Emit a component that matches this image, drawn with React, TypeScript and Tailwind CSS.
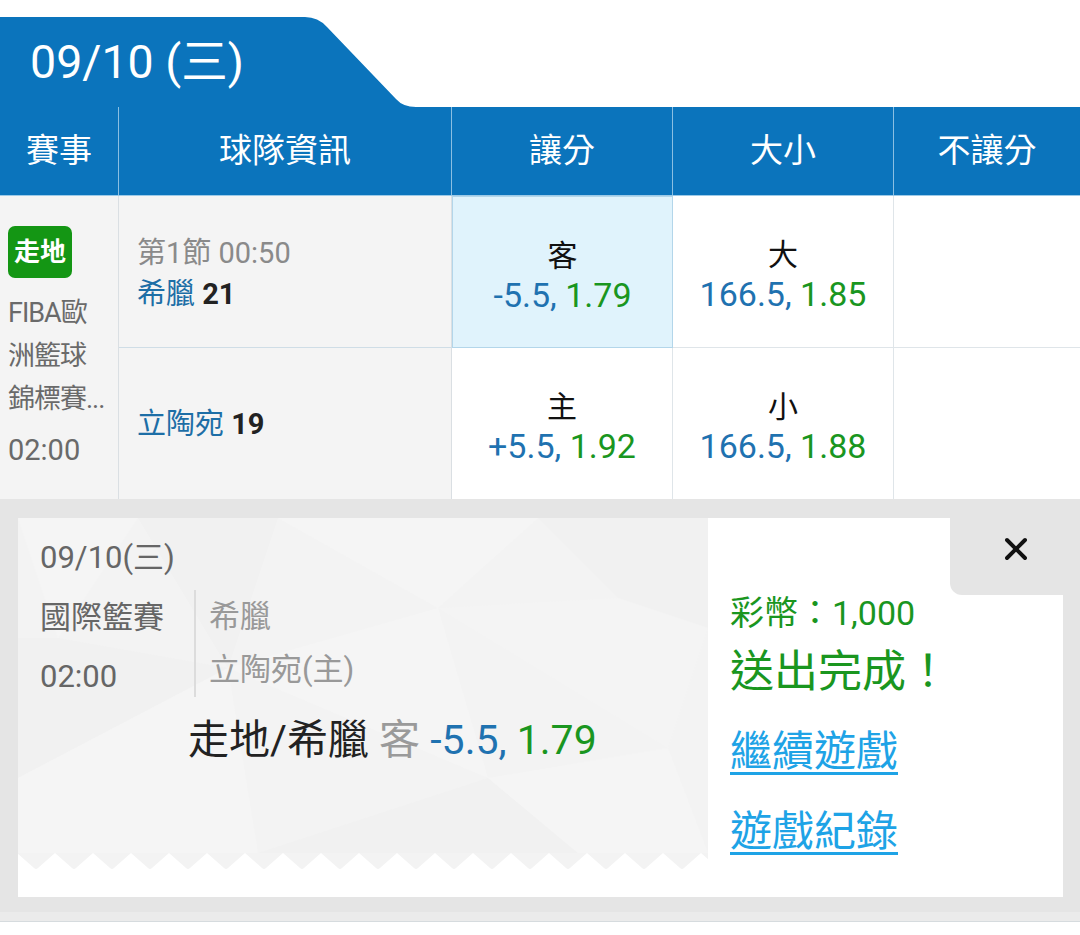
import React from "react";
import { X } from "lucide-react";

const F = "font-[Roboto,'Noto_Sans_CJK_TC',sans-serif]";

function Odds({ label, a, b }: { label: string; a: string; b: string }) {
  return (
    <div className="flex flex-col items-center justify-center h-full pt-[7px]">
      <div className="text-[30px] leading-[38px] text-[#111]">{label}</div>
      <div className="text-[34px] leading-[40px]">
        <span className="text-[#1f72b0]">{a}, </span>
        <span className="text-[#1a961f]">{b}</span>
      </div>
    </div>
  );
}

function Zigzag() {
  return (
    <svg width="100%" height="17" className="block">
      <defs>
        <pattern id="zz" x="-1" y="0" width="38" height="17" patternUnits="userSpaceOnUse">
          <path d="M0 0 H38 L21 15 Q19 17 17 15 Z" fill="#f3f3f3" />
        </pattern>
      </defs>
      <rect width="100%" height="17" fill="#ffffff" />
      <rect width="100%" height="17" fill="url(#zz)" />
    </svg>
  );
}

function LowPoly() {
  return (
    <svg className="absolute inset-0 w-full h-full" viewBox="0 0 690 335" preserveAspectRatio="none">
      <polygon points="0,0 120,0 40,120" fill="#f5f5f5" />
      <polygon points="120,0 260,0 210,150" fill="#f1f1f1" />
      <polygon points="260,0 520,0 420,90" fill="#f5f5f5" />
      <polygon points="520,0 690,0 690,110 600,80" fill="#f1f1f1" />
      <polygon points="0,120 40,120 210,150 0,260" fill="#f1f1f1" />
      <polygon points="210,150 420,90 470,260" fill="#f5f5f5" />
      <polygon points="420,90 600,80 690,110 650,230" fill="#f4f4f4" />
      <polygon points="0,260 210,150 240,335 0,335" fill="#f5f5f5" />
      <polygon points="240,335 470,260 560,335" fill="#f1f1f1" />
      <polygon points="470,260 650,230 690,335 560,335" fill="#f5f5f5" />
    </svg>
  );
}

export default function App() {
  return (
    <div className={`${F} w-[1080px] h-[935px] bg-white overflow-hidden flex flex-col`}>
      <div className="h-[17px]" />
      {/* date tab */}
      <div className="w-[416px] h-[90px] bg-[#0b74bc] flex items-center pl-[30px] [clip-path:path('M0,0H305Q318,0,327,10L396,82Q403,90,416,90H0Z')]">
        <span className="text-white text-[46.5px] leading-none">09/10 (三)</span>
      </div>
      {/* header */}
      <div className="grid grid-cols-[119px_333px_221px_221px_186px] h-[89px] bg-[#0b74bc] border-b border-[#9ccae8] text-white text-[33px]">
        <div className="flex items-center justify-center border-r border-[#8bbfe2]">賽事</div>
        <div className="flex items-center justify-center border-r border-[#8bbfe2]">球隊資訊</div>
        <div className="flex items-center justify-center border-r border-[#8bbfe2]">讓分</div>
        <div className="flex items-center justify-center border-r border-[#8bbfe2]">大小</div>
        <div className="flex items-center justify-center">不讓分</div>
      </div>
      {/* body */}
      <div className="grid grid-cols-[119px_333px_221px_221px_186px] grid-rows-[152px_151px]">
        <div className="row-span-2 bg-[#f4f4f4] border-r border-[#dadfe3] pl-[8px] pt-[30px] text-[#6a6a6a]">
          <div className="inline-flex items-center justify-center w-[64px] h-[52px] rounded-[7px] bg-[#149614] text-white font-bold text-[26px]">
            走地
          </div>
          <div className="mt-[14px] text-[27px] leading-[43px] tracking-[-1px]">
            <div>FIBA歐</div>
            <div>洲籃球</div>
            <div>錦標賽...</div>
          </div>
          <div className="mt-[9px] text-[29px] leading-[40px]">02:00</div>
        </div>
        <div className="bg-[#f4f4f4] border-r border-b border-r-[#dadfe3] border-b-[#cfdde6] pl-[18px] flex flex-col justify-center pt-[4px]">
          <div className="text-[29px] leading-[41px] text-[#8a8a8a]">第1節 00:50</div>
          <div className="text-[29px] leading-[41px]">
            <span className="text-[#1d6ea6]">希臘</span>{" "}
            <span className="font-bold text-[#222]">21</span>
          </div>
        </div>
        <div className="bg-[#e0f3fc] border border-[#b3d6ea]">
          <Odds label="客" a="-5.5" b="1.79" />
        </div>
        <div className="bg-white border-r border-b border-[#dfe5e9]">
          <Odds label="大" a="166.5" b="1.85" />
        </div>
        <div className="bg-white border-b border-[#dfe5e9]" />
        <div className="bg-[#f4f4f4] border-r border-[#dadfe3] pl-[18px] flex items-center pt-[2px]">
          <div className="text-[29px] leading-[41px]">
            <span className="text-[#1d6ea6]">立陶宛</span>{" "}
            <span className="font-bold text-[#222]">19</span>
          </div>
        </div>
        <div className="bg-white border-r border-[#dfe5e9]">
          <Odds label="主" a="+5.5" b="1.92" />
        </div>
        <div className="bg-white border-r border-[#dfe5e9]">
          <Odds label="小" a="166.5" b="1.88" />
        </div>
        <div className="bg-white" />
      </div>
      {/* gray area with card */}
      <div className="bg-[#e5e5e5] pt-[19px] pb-[15px] pl-[18px] pr-[17px]">
        <div className="flex h-[379px]">
          {/* left ticket */}
          <div className="w-[690px] flex flex-col bg-white">
            <div className="relative h-[335px] bg-[#f3f3f3] overflow-hidden">
              <LowPoly />
              <div className="relative pl-[22px] pt-[22px]">
                <div className="text-[31px] leading-[36px] text-[#666]">09/10(三)</div>
                <div className="mt-[14px] flex h-[107px]">
                  <div className="w-[154px] pt-[10px] text-[31px] leading-[36px] text-[#666]">
                    <div>國際籃賽</div>
                    <div className="mt-[23px]">02:00</div>
                  </div>
                  <div className="border-l-2 border-[#dcdcdc] pl-[13px] pt-[9px] text-[31px] leading-[36px] text-[#999]">
                    <div>希臘</div>
                    <div className="mt-[17px]">立陶宛(主)</div>
                  </div>
                </div>
                <div className="mt-[20px] ml-[148px] text-[41px] leading-[46px] whitespace-nowrap">
                  <span className="text-[#222]">走地/希臘</span>{" "}
                  <span className="text-[#9a9a9a]">客</span>{" "}
                  <span className="text-[#1f72b0]">-5.5,</span>{" "}
                  <span className="text-[#1a961f]">1.79</span>
                </div>
              </div>
            </div>
            <Zigzag />
          </div>
          {/* right section */}
          <div className="flex-1 flex flex-col bg-white">
            <div className="flex justify-end">
              <div className="w-[113px] h-[77px] bg-[#e5e5e5] rounded-bl-[12px] flex items-start justify-center pt-[13px] pl-[18px]">
                <X size={36} strokeWidth={2.6} color="#111" />
              </div>
            </div>
            <div className="pl-[22px]">
              <div className="text-[34px] leading-[36px] text-[#1a961f]">彩幣：1,000</div>
              <div className="mt-[16px] text-[44px] leading-[50px] text-[#1a961f]">送出完成！</div>
              <div className="mt-[31px] text-[42px] leading-[48px] text-[#1ea3e6] underline decoration-[3px] underline-offset-[6px]">
                繼續遊戲
              </div>
              <div className="mt-[32px] text-[42px] leading-[48px] text-[#1ea3e6] underline decoration-[3px] underline-offset-[6px]">
                遊戲紀錄
              </div>
            </div>
          </div>
        </div>
      </div>
      <div className="h-[10px] bg-[#ebebeb] border-b border-[#d6dbde]" />
      <div className="flex-1 bg-white" />
    </div>
  );
}
